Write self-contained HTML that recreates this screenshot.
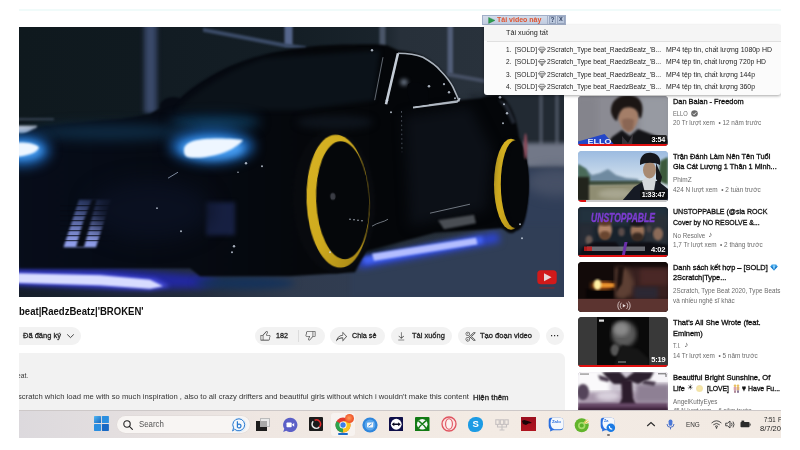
<!DOCTYPE html>
<html lang="vi">
<head>
<meta charset="utf-8">
<title>YouTube</title>
<style>
html,body{margin:0;padding:0;}
body{width:800px;height:450px;background:#fff;overflow:hidden;position:relative;font-family:"Liberation Sans",sans-serif;color:#0f0f0f;}
#root{position:absolute;left:0;top:0;width:800px;height:450px;overflow:hidden;filter:blur(0.5px);}
.a{position:absolute;}
.t{position:absolute;white-space:nowrap;line-height:1.15;transform-origin:0 50%;}
.pill{position:absolute;background:#f2f2f2;border-radius:9px;height:18px;top:327px;}
.thumb{position:absolute;left:578px;width:90.300px;height:50.300px;border-radius:4px;overflow:hidden;background:#222;}
.thumb svg{position:absolute;left:0;top:0;}
</style>
</head>
<body>
<div id="root">
<!-- top faint line -->
<div class="a" style="left:18px;top:9px;width:764px;height:1.600px;background:#f0fbfa;"></div>
<!-- VIDEO -->
<div class="a" id="video" style="left:18px;top:26.800px;width:546px;height:270px;background:#0b141c;overflow:hidden;">
<svg id="scene" width="546" height="270" viewBox="18 26.800 546 270">
<defs>
<filter id="b05" color-interpolation-filters="sRGB" filterUnits="userSpaceOnUse" x="-40" y="-40" width="700" height="420"><feGaussianBlur stdDeviation="0.6"/></filter>
<filter id="b1" color-interpolation-filters="sRGB" filterUnits="userSpaceOnUse" x="-40" y="-40" width="700" height="420"><feGaussianBlur stdDeviation="1"/></filter>
<filter id="b2" color-interpolation-filters="sRGB" filterUnits="userSpaceOnUse" x="-40" y="-40" width="700" height="420"><feGaussianBlur stdDeviation="2"/></filter>
<filter id="b3" color-interpolation-filters="sRGB" filterUnits="userSpaceOnUse" x="-40" y="-40" width="700" height="420"><feGaussianBlur stdDeviation="3.5"/></filter>
<filter id="b6" color-interpolation-filters="sRGB" filterUnits="userSpaceOnUse" x="-40" y="-40" width="700" height="420"><feGaussianBlur stdDeviation="6"/></filter>
<filter id="b10" color-interpolation-filters="sRGB" filterUnits="userSpaceOnUse" x="-40" y="-40" width="700" height="420"><feGaussianBlur stdDeviation="10"/></filter>
<linearGradient id="floorg" x1="0" y1="0" x2="1" y2="0"><stop offset="0" stop-color="#161e2a"/><stop offset="0.3" stop-color="#222b3a"/><stop offset="0.5" stop-color="#303b4e"/><stop offset="1" stop-color="#34425a"/></linearGradient>
<linearGradient id="grl" x1="0" y1="0" x2="0" y2="1"><stop offset="0" stop-color="#2c3a66"/><stop offset="1" stop-color="#98a6f4"/></linearGradient>
<linearGradient id="bgw" x1="0" y1="0" x2="1" y2="0"><stop offset="0" stop-color="#0f191e"/><stop offset="0.24" stop-color="#101a20"/><stop offset="0.27" stop-color="#121c23"/><stop offset="0.5" stop-color="#141e25"/><stop offset="0.66" stop-color="#19232b"/><stop offset="0.7" stop-color="#27303a"/><stop offset="1" stop-color="#2a333d"/></linearGradient>
<linearGradient id="bodyg" x1="0" y1="0" x2="1" y2="0"><stop offset="0" stop-color="#070d1a"/><stop offset="0.35" stop-color="#060a12"/><stop offset="0.6" stop-color="#05070a"/><stop offset="1" stop-color="#040609"/></linearGradient>
<linearGradient id="yel" x1="0" y1="0" x2="1" y2="1"><stop offset="0" stop-color="#d8b424"/><stop offset="0.5" stop-color="#cfaa1e"/><stop offset="1" stop-color="#9c7e14"/></linearGradient>
</defs>
<!-- background wall -->
<rect x="19" y="27" width="545" height="270" fill="url(#bgw)"/>
<!-- pillars / beams -->
<rect x="143" y="20" width="15" height="93" fill="#263248" filter="url(#b2)"/>
<rect x="146" y="20" width="9" height="92" fill="#3a4a6a" filter="url(#b2)"/>
<rect x="284.500" y="20" width="8" height="26" fill="#56668c" filter="url(#b1)"/>
<rect x="379.5" y="20" width="6" height="30" fill="#4a5668" filter="url(#b1)"/>
<rect x="447.5" y="20" width="5.5" height="54" fill="#525e78" filter="url(#b1)"/>
<path d="M447 72 L486 79 L486 83 L447 76Z" fill="#465064" filter="url(#b1)"/>
<path d="M203 27.500 L284 43 L306 46 L306 49 L284 47 L203 31.500Z" fill="#3c4c68" filter="url(#b1)"/>
<rect x="470" y="93" width="100" height="50" fill="#222a33" filter="url(#b2)"/>
<rect x="539" y="90" width="4" height="55" fill="#454c5a" filter="url(#b1)"/>
<rect x="555" y="90" width="4" height="55" fill="#454c5a" filter="url(#b1)"/>
<!-- far right lighter band -->
<rect x="518" y="143" width="52" height="25" fill="#727888" filter="url(#b2)"/>
<!-- floor -->
<rect x="19" y="258" width="545" height="45" fill="url(#floorg)"/>
<rect x="500" y="168" width="70" height="132" fill="#303e58" filter="url(#b2)"/>
<ellipse cx="556" cy="182" rx="30" ry="14" fill="#465066" filter="url(#b6)"/>
<path d="M350 262 L500 225 L564 225 L564 297 L350 297Z" fill="#303e56" filter="url(#b2)"/>
<!-- left distant bright patch -->
<rect x="10" y="125.500" width="27" height="7.500" fill="#c4cad8" filter="url(#b1)"/>
<rect x="12" y="118" width="42" height="2" fill="#3a4656" filter="url(#b1)"/>

<!-- underglow front -->
<path d="M10 268 L120 269 L200 275 L222 281 L200 288 L120 289 L10 284Z" fill="#2228a0" filter="url(#b3)"/>
<path d="M10 272 L100 273.500 L155 278.500 L170 286 L150 289.500 L100 286.500 L10 283.500Z" fill="#4a50e0" filter="url(#b2)"/>
<path d="M10 273 L100 275 L150 279.500 L163 286 L150 288.500 L100 285 L10 282.500Z" fill="#d8dcff" filter="url(#b1)"/>
<ellipse cx="245" cy="283" rx="50" ry="6" fill="#15325a" filter="url(#b3)"/>
<!-- underglow side -->
<path d="M356 259 L498 232 L500 242 L360 268Z" fill="#2c44d0" filter="url(#b3)"/>
<path d="M362 257 L482 236 L483 243 L365 264Z" fill="#4464f6" filter="url(#b2)"/>
<path d="M372 253.500 L476 237.500 L477.500 244 L374 260.500Z" fill="#b4beff" filter="url(#b1)"/>

<!-- car body -->
<path filter="url(#b1)" fill="url(#bodyg)" d="M19 137 C26 133 32 129 38 127 C50 125 56 124.500 60 124 C80 122 100 120 119.500 118.700 C130 117.500 140 115.500 150 113.700 L160 108 C158 100 170 94 180 98 C190 88 200 82 212 75 C228 66 243 60 259 56 C275 51 290 49 306 47 C320 45 340 44 353 44.4 C365 44 380 44 387 45 L398 50 C408 51 416 53 423 56 C430 60 436 64 440 69 C446 75 450 80 453 86 L459 100 C466 99 473 99 480 98 C487 96 493 94 498 95 C503 96 506 99 507 102 C511 107 513 112 515 118 C518 127 519 135 520 144 C523 150 525 158 526 165 C527 177 528 190 527 200 C526 210 525 218 522 225 L512.500 231 L501 228 L435 232.500 L366 251 L355 272 L290 276 L200 276 L190 268 L19 268Z"/>
<!-- windshield tint -->
<path filter="url(#b2)" fill="#0b1219" d="M176 110 C200 88 232 68 264 58 L380 50 L374 100 L300 110 Z"/>
<!-- hood blue sheen -->
<ellipse cx="215" cy="122" rx="45" ry="7" fill="#0f3c5e" filter="url(#b6)"/>
<ellipse cx="110" cy="132" rx="80" ry="8" fill="#0e2a42" filter="url(#b6)"/>
<!-- headlights -->
<ellipse cx="212" cy="146" rx="42" ry="17" fill="#1c64b4" filter="url(#b6)"/>
<ellipse cx="212" cy="148" rx="32" ry="11" fill="#469cf0" filter="url(#b3)"/>
<path d="M184 150 C184 142 195 139 210 138.500 C225 138 238 139 243 140 C238 146 228 152 215 155 C203 158 190 158.500 186 156 C184 154 184 152 184 150Z" fill="#eef6ff" filter="url(#b1)"/>
<ellipse cx="22" cy="150" rx="28" ry="16" fill="#1c64b4" filter="url(#b6)"/>
<ellipse cx="22" cy="150" rx="20" ry="9" fill="#469cf0" filter="url(#b3)"/>
<path d="M10 143 C22 141.500 34 142.500 39 147 C37 153 26 156.500 10 157Z" fill="#eef6ff" filter="url(#b1)"/>
<!-- grille lights -->
<path d="M79 199.5 L111 199.5 L96 247 L63.5 247Z" fill="url(#grl)" filter="url(#b1)"/>
<path d="M92 199 L97 199 L90 225 L84 247 L76 247 L83 222Z" fill="#070b12" filter="url(#b1)"/>
<rect x="206" y="202" width="29" height="33" fill="#172042" filter="url(#b2)"/>
<g stroke="#060a14" stroke-width="1.300" opacity="0.7"><path d="M60 205.500H115M60 210.500H115M60 215.500H115M60 220.500H115M60 225.500H115M60 230.500H115M60 235.500H115M60 240.500H115"/></g>
<!-- front wheel -->
<g transform="rotate(-2.4 338 200)">
<ellipse cx="334" cy="201" rx="41" ry="71.500" fill="#080a0e" filter="url(#b1)"/>
<ellipse cx="338" cy="201" rx="31.500" ry="66.500" fill="url(#yel)" filter="url(#b05)"/>
<ellipse cx="342.700" cy="200.300" rx="26.500" ry="59" fill="#05070a" filter="url(#b05)"/>
<ellipse cx="333" cy="196" rx="2.600" ry="3.600" fill="#3a3c44" filter="url(#b05)"/>
</g>
<!-- rear wheel -->
<ellipse cx="511" cy="185" rx="17" ry="48" fill="#06080b" filter="url(#b1)"/>
<ellipse cx="511" cy="184" rx="17" ry="45.500" fill="url(#yel)" filter="url(#b05)"/>
<ellipse cx="514.800" cy="184" rx="14" ry="43.500" fill="#05070a" filter="url(#b05)"/>
<ellipse cx="517.500" cy="184" rx="11" ry="46" fill="#05070a" filter="url(#b1)"/>
<ellipse cx="525.500" cy="146" rx="1.800" ry="13" fill="#8a4a5a" filter="url(#b1)"/>
<!-- window chrome -->
<path d="M398 53 L386 104" stroke="#c4ccd6" stroke-width="2.6" fill="none" filter="url(#b05)"/>
<path d="M398 53 C410 53 418 55 423 57 C430 61 436 65 440 70 C446 76 450 81 453 87 L459 100.5 L413.5 107" stroke="#aab2bc" stroke-width="1.6" fill="none" filter="url(#b05)"/>
<path d="M383 57 L374.700 100" stroke="#7a828c" stroke-width="0.800" fill="none"/>
<path d="M413 107.500 L457 101.800 L460 98" stroke="#c8d0da" stroke-width="1.800" fill="none" filter="url(#b05)"/>
<path d="M401.500 111 L402 152" stroke="#8a94a4" stroke-width="0.700" stroke-dasharray="1.500 3" fill="none" filter="url(#b05)"/>
<!-- gloss -->
<path d="M404 116 L470 106 L492 150 L486 210 L410 226Z" fill="#0c1017" filter="url(#b6)"/>
<ellipse cx="335" cy="122" rx="38" ry="7" fill="#0e141c" filter="url(#b3)"/>
<ellipse cx="150" cy="210" rx="60" ry="30" fill="#0a1020" filter="url(#b10)"/>
<path d="M498 99 L508 104 L516 122 L512 124 L505 108Z" fill="#222832" filter="url(#b1)"/>
<ellipse cx="404" cy="82" rx="3.500" ry="3" fill="#7a8698" filter="url(#b2)"/>
<!-- mirror -->
<path d="M408 84 C414 80 424 82 428 90 L429 104 L414 106 C408 100 406 90 408 84Z" fill="#04060a" filter="url(#b05)"/>
<!-- sparkles -->
<g fill="#cfd8e6" opacity="0.800" filter="url(#b05)"><circle cx="387" cy="100" r="1.300"/><circle cx="391" cy="112" r="1"/><circle cx="444" cy="84" r="1.100"/><circle cx="449" cy="92" r="1.200"/><circle cx="455" cy="98" r="1"/><circle cx="429" cy="86" r="1.300"/><circle cx="500" cy="97" r="1.300"/><circle cx="504" cy="104" r="1"/><circle cx="507" cy="113" r="1.200"/><circle cx="503" cy="123" r="1"/><circle cx="372" cy="50" r="1.200"/><circle cx="262" cy="166" r="1"/><circle cx="246" cy="163" r="1.200"/><circle cx="238" cy="172" r="0.800"/><circle cx="157" cy="208" r="0.900"/><circle cx="181" cy="231" r="1"/><circle cx="234" cy="246" r="1.200"/><circle cx="232" cy="252" r="1"/><circle cx="350" cy="219" r="0.800"/><circle cx="354" cy="219.500" r="0.800"/><circle cx="358" cy="220" r="0.800"/><circle cx="362" cy="220.500" r="0.800"/><circle cx="330" cy="252" r="1"/><circle cx="522" cy="238" r="1"/><circle cx="520" cy="224" r="1"/></g>
<path d="M168 178 L178 172" stroke="#9aa8c0" stroke-width="0.800" filter="url(#b05)"/>
<path d="M372 226 C378 222 384 222 388 219 M430 213 L470 204" stroke="#8a929c" stroke-width="0.800" fill="none" filter="url(#b05)"/>
<!-- side skirt reflection -->
<path d="M438 220 L474 214.500 L476 223 L444 229Z" fill="#4a4e54" filter="url(#b1)"/>
<!-- logo -->
<rect x="537.3" y="270" width="19.4" height="14" rx="3.5" fill="#d11a1a"/>
<path d="M544 273 L544 281 L551.500 277Z" fill="#e8d8d8"/>
<rect x="539.500" y="287" width="15" height="1.400" fill="#a01c1c" opacity="0.600" filter="url(#b05)"/>
</svg>
</div>
<!-- subscribe pill -->
<div class="pill" style="left:10px;width:71px;"></div>
<svg class="a" style="left:65.5px;top:332px;" width="9" height="8" viewBox="0 0 9 8"><path d="M1.2 2.4 L4.5 5.6 L7.8 2.4" fill="none" stroke="#333" stroke-width="0.9"/></svg>
<!-- like/dislike -->
<div class="pill" style="left:254.5px;width:70.5px;"></div>
<div class="a" style="left:297.5px;top:330px;width:0.8px;height:12px;background:#dcdcdc;"></div>
<svg class="a" style="left:259px;top:329.3px;" width="13" height="13" viewBox="0 0 24 24" fill="#222"><path d="M18.77,11h-4.23l1.52-4.94C16.38,5.03,15.54,4,14.38,4c-0.58,0-1.14,0.24-1.52,0.65L7,11H3v10h4h1h9.43 c1.06,0,1.98-0.67,2.19-1.61l1.34-6C21.23,12.15,20.18,11,18.77,11z M7,20H4v-8h3V20z M19.98,13.17l-1.34,6 C18.54,19.65,18.03,20,17.43,20H8v-8.61l5.6-6.06C13.79,5.12,14.08,5,14.38,5c0.26,0,0.5,0.11,0.63,0.3 c0.07,0.1,0.15,0.26,0.09,0.47l-1.52,4.94L13.18,12h1.35h4.23c0.41,0,0.8,0.17,1.03,0.46C19.92,12.61,20.05,12.86,19.98,13.17z"/></svg>
<svg class="a" style="left:303.5px;top:329px;" width="13" height="13" viewBox="0 0 24 24" fill="#222"><path d="M17,4h-1H6.57C5.5,4,4.59,4.67,4.38,5.61l-1.34,6C2.77,12.85,3.82,14,5.23,14h4.23l-1.52,4.94C7.62,19.97,8.46,21,9.62,21 c0.58,0,1.14-0.24,1.52-0.65L17,14h4V4H17z M10.4,19.67C10.21,19.88,9.92,20,9.62,20c-0.26,0-0.5-0.11-0.63-0.3 c-0.07-0.1-0.15-0.26-0.09-0.47l1.52-4.94l0.4-1.29H9.46H5.23c-0.41,0-0.8-0.17-1.03-0.46c-0.12-0.15-0.25-0.4-0.18-0.72l1.34-6 C5.46,5.35,5.97,5,6.57,5H16v8.610L10.4,19.67z M20,13h-3V5h3V13z"/></svg>
<!-- share -->
<div class="pill" style="left:330px;width:55px;"></div>
<svg class="a" style="left:335px;top:329.5px;" width="13" height="13" viewBox="0 0 24 24" fill="#222"><path d="M15,5.63L20.66,12L15,18.37V15v-1h-1c-3.96,0-7.14,1-9.750,3.090c1.840-4.070,5.110-6.400,9.890-7.100L15,9.860V9V5.630 M14,3v6 C6.220,10.130,3.110,15.330,2,21c2.780-3.970,6.440-6,12-6v6l8-9L14,3L14,3z"/></svg>
<!-- download -->
<div class="pill" style="left:391px;width:61px;"></div>
<svg class="a" style="left:394.700px;top:329.500px;" width="13" height="13" viewBox="0 0 24 24" fill="#222"><path d="M17,18v1H6v-1H17z M16.500,11.400l-0.700-0.700L12,14.400V4h-1v10.400l-3.800-3.800l-0.700,0.700l5,5L16.500,11.400z"/></svg>
<!-- clip -->
<div class="pill" style="left:458px;width:82px;"></div>
<svg class="a" style="left:463.500px;top:329.500px;" width="13" height="13" viewBox="0 0 24 24" fill="#222"><path d="M8,7c0,0.550-0.450,1-1,1S6,7.550,6,7c0-0.550,0.450-1,1-1S8,6.450,8,7z M7,16c-0.550,0-1,0.450-1,1c0,0.550,0.450,1,1,1s1-0.450,1-1 C8,16.450,7.550,16,7,16z M10.790,8.230L21,18.440V20h-3.270l-5.760-5.760l-1.270,1.270C10.890,15.970,11,16.470,11,17c0,2.210-1.790,4-4,4 c-2.210,0-4-1.790-4-4c0-2.210,1.790-4,4-4c0.420,0,0.810,0.080,1.190,0.200l1.370-1.370l-1.110-1.110C8,10.890,7.510,11,7,11c-2.210,0-4-1.790-4-4 c0-2.210,1.790-4,4-4c2.210,0,4,1.790,4,4C11,7.430,10.910,7.840,10.790,8.230z M10.080,8.940L9.650,8.500l0.190-0.580C9.950,7.580,10,7.280,10,7 c0-1.650-1.350-3-3-3S4,5.350,4,7c0,1.650,1.350,3,3,3c0.360,0,0.730-0.070,1.090-0.210L8.700,9.550l0.460,0.460l1.110,1.110l0.710,0.710l-0.710,0.710 L8.900,13.910l-0.430,0.430l-0.580-0.180C7.550,14.050,7.270,14,7,14c-1.650,0-3,1.350-3,3c0,1.650,1.350,3,3,3s3-1.350,3-3 c0-0.380-0.070-0.750-0.220-1.120l-0.250-0.610L10,14.800l1.270-1.270l0.710-0.710l0.710,0.710L18.150,19H20v-0.150L10.080,8.940z M17.730,4H21v1.560 l-5.520,5.520l-2.410-2.410L17.730,4z M18.150,5l-3.670,3.670l1,1L20,5.150V5H18.150z"/></svg>
<!-- more -->
<div class="pill" style="left:546px;width:18px;"></div>
<!-- description box -->
<div class="a" style="left:10px;top:353px;width:555px;height:70px;background:#f2f2f2;border-radius:6px;"></div>
<!-- SIDEBAR -->
<svg width="0" height="0" style="position:absolute"><defs>
<filter id="t05" color-interpolation-filters="sRGB"><feGaussianBlur stdDeviation="0.5"/></filter>
<filter id="t1" color-interpolation-filters="sRGB"><feGaussianBlur stdDeviation="1"/></filter>
<filter id="t2" color-interpolation-filters="sRGB"><feGaussianBlur stdDeviation="2"/></filter>
<filter id="t3" color-interpolation-filters="sRGB"><feGaussianBlur stdDeviation="3"/></filter>
</defs></svg>
<style>
.dur{position:absolute;right:1.8px;bottom:3.2px;background:rgba(10,10,10,.8);color:#fff;font-size:7.2px;font-weight:bold;padding:0.6px 1.5px;border-radius:1.5px;line-height:1;letter-spacing:-0.2px;}
.pb{position:absolute;left:0;bottom:0;height:2px;width:100%;background:#e01010;}
</style>
<!-- 1 Dan Balan -->
<div class="thumb" style="top:96.200px;background:#8d8d95;">
<svg width="90" height="50" viewBox="0 0 90 50">
<rect width="90" height="50" fill="#8b8b93"/>
<rect x="62" width="30" height="50" fill="#979aa2" filter="url(#t3)"/>
<rect x="-4" width="24" height="50" fill="#84848c" filter="url(#t3)"/>
<path d="M28 50 L34 41 L44 34 L52 40 L60 33 L76 39 L90 44 L90 50Z" fill="#141418" filter="url(#t1)"/>
<path d="M40 14 C40 8 46 6 51 6 C57 6 61 10 61 16 C61 24 58 32 52 36 C47 36 42 30 40 22Z" fill="#a47e68" filter="url(#t1)"/>
<path d="M44 24 C47 22 52 22 56 24 L55 33 L50 36 L45 32Z" fill="#8a6654" filter="url(#t1)"/>
<path d="M33 16 C32 4 42 -2 52 -1 C62 0 66 8 64 18 C63 24 61 24 60 17 C58 12 52 10 46 12 C42 14 40 20 39 25 C36 24 34 20 33 16Z" fill="#1c1614" filter="url(#t1)"/>
<path d="M44 40 L50 47 L55 38 L54 50 L44 50Z" fill="#38343a" filter="url(#t05)"/>
<path d="M0 50 L0 45.500 L26.500 38 L37.500 50Z" fill="#2446c8" filter="url(#t05)"/>
<text x="9.500" y="48.400" font-family="Liberation Sans, sans-serif" font-weight="bold" font-size="7" fill="#e8ecff" textLength="24" lengthAdjust="spacingAndGlyphs">ELLO</text>
</svg>
<div class="pb"></div><div class="dur">3:54</div></div>
<!-- 2 PhimZ -->
<div class="thumb" style="top:151.400px;background:#9db4c8;">
<svg width="90" height="50" viewBox="0 0 90 50">
<defs><linearGradient id="sky2" x1="0" y1="0" x2="0" y2="1"><stop offset="0" stop-color="#9cbbe0"/><stop offset="0.6" stop-color="#d4e2ee"/><stop offset="1" stop-color="#c8d0d0"/></linearGradient></defs>
<rect width="90" height="50" fill="url(#sky2)"/>
<path d="M0 14 L8 18 L14 24 L22 22 L30 18 L38 24 L48 27 L60 28 L62 34 L0 34Z" fill="#6f8aa0" filter="url(#t1)"/>
<path d="M0 13 L8 18 L12 26 L12 32 L0 32Z" fill="#4a6a58" filter="url(#t1)"/>
<rect x="0" y="30" width="70" height="5" fill="#3a4a3a" filter="url(#t1)"/>
<path d="M10 34 L62 33 L56 50 L0 50 L0 40Z" fill="#8f8d72" filter="url(#t1)"/>
<ellipse cx="38" cy="43" rx="18" ry="5" fill="#a8a690" filter="url(#t2)"/>
<rect x="-2" y="26" width="13" height="24" fill="#22241c" filter="url(#t1)"/>
<path d="M82 10 L90 6 L90 34 L80 30Z" fill="#3c5a3c" filter="url(#t1)"/>
<path d="M44 50 L56 36 L66 30 L80 30 L90 38 L90 50Z" fill="#161a24" filter="url(#t05)"/>
<path d="M64 30 L70 24 L78 28 L76 40 L68 46Z" fill="#d4d8dc" filter="url(#t05)"/>
<ellipse cx="71.5" cy="19" rx="6.5" ry="8.5" fill="#a88a72" filter="url(#t05)"/>
<path d="M62 12 C62 4 68 1 74 2 C81 3 83 8 82 14 C76 11 68 11 62 14Z" fill="#15171c" filter="url(#t05)"/>
<path d="M78 12 L84 26 L82 34 L78 28Z" fill="#15171c" filter="url(#t05)"/>
</svg>
<div class="pb" style="background:#c9c9c9;"></div><div class="pb" style="width:8px;"></div><div class="dur">1:33:47</div></div>
<!-- 3 Unstoppable -->
<div class="thumb" style="top:206.600px;background:#1b1a26;">
<svg width="90" height="50" viewBox="0 0 90 50">
<rect width="90" height="50" fill="#18222c"/>
<rect x="0" y="0" width="90" height="18" fill="#22323e" filter="url(#t2)"/>
<rect x="66" y="8" width="24" height="30" fill="#2a3038" filter="url(#t2)"/>
<rect x="0" y="16" width="16" height="24" fill="#262c36" filter="url(#t2)"/>
<ellipse cx="27" cy="23" rx="7" ry="8.500" fill="#b08468" filter="url(#t1)"/>
<ellipse cx="27" cy="28.500" rx="5.500" ry="4.500" fill="#6a4630" filter="url(#t1)"/>
<ellipse cx="27" cy="15.500" rx="7" ry="3.500" fill="#5a3a28" filter="url(#t1)"/>
<ellipse cx="59.500" cy="24" rx="7" ry="8.500" fill="#9a7258" filter="url(#t1)"/>
<ellipse cx="59.500" cy="30" rx="6" ry="4.500" fill="#3a2a22" filter="url(#t1)"/>
<ellipse cx="59.500" cy="16.500" rx="8" ry="3.500" fill="#16161a" filter="url(#t1)"/>
<ellipse cx="80" cy="27" rx="5" ry="6.500" fill="#8a6a58" filter="url(#t1)"/>
<ellipse cx="11" cy="33" rx="3.500" ry="4.500" fill="#6a5a54" filter="url(#t1)"/>
<ellipse cx="43.500" cy="25" rx="3.200" ry="4.200" fill="#5a4c4a" filter="url(#t1)"/>
<ellipse cx="71" cy="22" rx="2.600" ry="3.500" fill="#4a4244" filter="url(#t1)"/>
<path d="M0 50 L5 40 L16 35 L38 35 L44 43 L49 36 L72 35 L90 38 L90 50Z" fill="#0e0e14" filter="url(#t1)"/>
<rect x="9" y="39.500" width="58" height="4.500" fill="#c8ccd4" opacity="0.500" filter="url(#t05)"/>
<rect x="6" y="39.500" width="8" height="4.500" fill="#c81c1c" opacity="0.850" filter="url(#t05)"/>
<path d="M46.500 35 L49.500 35 L46.500 50 L43.500 50Z" fill="#6a30a8" filter="url(#t05)"/>
<text x="13" y="14.500" font-family="Liberation Sans, sans-serif" font-weight="bold" font-style="italic" font-size="12.500" fill="#7c3cd0" stroke="#7c3cd0" stroke-width="0.400" textLength="64" lengthAdjust="spacingAndGlyphs">UNSTOPPABLE</text>
</svg>
<div class="pb"></div><div class="dur" style="background:none;font-size:7.600px;right:1.500px;bottom:3px;">4:02</div></div>
<!-- 4 mix -->
<div class="thumb" style="top:262.100px;background:#1a0f0d;">
<svg width="90" height="50" viewBox="0 0 90 50">
<rect width="90" height="50" fill="#120a09"/>
<rect x="50" y="5" width="42" height="33" fill="#38201f" filter="url(#t2)"/>
<rect x="62" y="7" width="28" height="16" fill="#4a2826" filter="url(#t2)"/>
<path d="M37 5 L50 6 L56 20 L54 32 L46 38 L37 36Z" fill="#5e4034" filter="url(#t2)"/>
<path d="M40 4 L46 4 L44 22 L38 30Z" fill="#1c100e" filter="url(#t1)"/>
<rect x="56" y="25" width="24" height="12" fill="#2c2834" filter="url(#t2)"/>
<rect x="8" y="27" width="27" height="9.500" fill="#080404" filter="url(#t1)"/>
<ellipse cx="25" cy="23.500" rx="12" ry="4" fill="#c8661a" filter="url(#t2)"/>
<rect x="22" y="21.500" width="14" height="3.500" fill="#f09a30" filter="url(#t1)"/>
<ellipse cx="19.500" cy="22.500" rx="3.800" ry="5.200" fill="#fff0a4" filter="url(#t1)"/>
<rect x="0" y="36.800" width="90" height="13.500" fill="#5c3430"/>
<g fill="none" stroke="#e8dcdc" stroke-width="0.800" stroke-linecap="round"><path d="M43.200 41 A4 4 0 0 0 43.200 46.600"/><path d="M41.200 39.800 A6 6 0 0 0 41.200 47.800"/><path d="M48.800 41 A4 4 0 0 1 48.800 46.600"/><path d="M50.800 39.800 A6 6 0 0 1 50.800 47.800"/></g>
<path d="M44.800 42 L44.800 45.600 L47.800 43.800Z" fill="#e8dcdc"/>
</svg></div>
<!-- 5 TI -->
<div class="thumb" style="top:317.200px;background:#3a3a3a;">
<svg width="90" height="50" viewBox="0 0 90 50">
<rect width="90" height="50" fill="#393939"/>
<rect x="19" y="0" width="52" height="50" fill="#0a0a0a"/>
<ellipse cx="46" cy="17" rx="12.5" ry="13" fill="#5a5a5a" filter="url(#t2)"/>
<ellipse cx="43" cy="12" rx="8" ry="7" fill="#8a8a8a" filter="url(#t2)"/>
<ellipse cx="37" cy="33" rx="4.5" ry="6" fill="#585858" filter="url(#t1)"/>
<path d="M44 28 L60 32 L71 42 L71 50 L36 50 L40 36Z" fill="#161616" filter="url(#t1)"/>
<rect x="21" y="2.5" width="5" height="2.2" fill="#ddd" filter="url(#t05)"/>
<rect x="40" y="44.5" width="8" height="1" fill="#999" filter="url(#t05)"/>
</svg>
<div class="pb"></div><div class="dur" style="background:none;font-size:7.4px;right:1.5px;bottom:3px;">5:19</div></div>
<!-- 6 tree -->
<div class="thumb" style="top:372.300px;background:#a79aa8;">
<svg width="90" height="50" viewBox="0 0 90 50">
<rect width="90" height="50" fill="#cfc8d4"/>
<rect x="-2" y="-2" width="34" height="24" fill="#faf9fb" filter="url(#t2)"/>
<rect x="64" y="-2" width="30" height="14" fill="#f6f4f8" filter="url(#t2)"/>
<rect x="0" y="20" width="90" height="12" fill="#a898ac" filter="url(#t2)"/>
<rect x="58" y="12" width="34" height="18" fill="#8e8094" filter="url(#t2)"/>
<ellipse cx="30" cy="24" rx="12" ry="5" fill="#d8d0dc" filter="url(#t2)"/>
<path d="M24 0 L42 0 L48 6 L56 0 L76 0 L72 7 L60 12 L52 9 L44 12 L36 12 L30 7Z" fill="#2c202e" filter="url(#t1)"/>
<path d="M20 3 L32 6 L30 10 L22 8Z M66 8 L78 10 L76 14 L64 12Z" fill="#4a3c4e" filter="url(#t1)"/>
<path d="M43 8 L54 8 L55 26 L60 38 L39 38 L44 26Z" fill="#2c1c2c" filter="url(#t1)"/>
<ellipse cx="5" cy="20" rx="6" ry="8" fill="#54445a" filter="url(#t1)"/>
<rect x="0" y="31" width="90" height="19" fill="#644664" filter="url(#t1)"/>
<rect x="0" y="35.500" width="90" height="15" fill="#3e243c" filter="url(#t1)"/>
<rect x="2" y="1.600" width="9" height="0.900" fill="#666"/>
<path d="M80 1.800 L88 1.800 L88 5" fill="none" stroke="#555" stroke-width="0.900"/>
</svg></div>
<!-- verified / emoji icons -->
<svg class="a" style="left:690.5px;top:110.3px;" width="7" height="7" viewBox="0 0 7 7"><circle cx="3.5" cy="3.5" r="3.3" fill="#6a6a6a"/><path d="M1.900 3.600 L3.100 4.800 L5.200 2.400" fill="none" stroke="#fff" stroke-width="0.900"/></svg>
<svg class="a" style="left:769.500px;top:263.500px;" width="8" height="7" viewBox="0 0 8 7"><path d="M1.800 0.500 L6.200 0.500 L7.700 2.500 L4 6.600 L0.300 2.500Z" fill="#3aa0e8"/><path d="M0.300 2.500 L7.700 2.500 L4 6.600Z" fill="#1a78c8"/><path d="M2.800 2.500 L4 0.500 L5.200 2.500 L4 6.600Z" fill="#8ad0f8"/></svg>
<div class="a" style="left:695.700px;top:384.600px;width:7.400px;height:7.400px;border-radius:50%;background:radial-gradient(circle,#f8e9a8 0%,#f2e2a6 55%,#f6efd2 100%);"></div>
<svg class="a" style="left:732.500px;top:384px;" width="7" height="9" viewBox="0 0 7 9"><circle cx="2" cy="1.700" r="1.300" fill="#e8c060"/><circle cx="5" cy="1.700" r="1.300" fill="#e8c060"/><rect x="0.700" y="3" width="2.600" height="3.400" fill="#d8a0b0"/><rect x="3.700" y="3" width="2.600" height="3.400" fill="#e0b070"/><rect x="1" y="6.400" width="2" height="2.400" fill="#b08898"/><rect x="4" y="6.400" width="2" height="2.400" fill="#8a7a9a"/></svg>
<!-- IDM bar -->
<div class="a" id="idm" style="left:481.5px;top:15px;width:84px;height:9.5px;background:linear-gradient(180deg,#d3dcea,#bfcbe0);border:0.6px solid #a2afc8;box-sizing:border-box;"></div>
<div class="a" style="left:547px;top:15.5px;width:0.8px;height:8.5px;background:#a2afc8;"></div>
<div class="a" style="left:548.8px;top:16px;width:7.6px;height:7.6px;background:#bac7dc;border:0.5px solid #98a6c0;box-sizing:border-box;"></div>
<div class="a" style="left:557px;top:16px;width:7.6px;height:7.6px;background:#bac7dc;border:0.5px solid #98a6c0;box-sizing:border-box;"></div>
<svg class="a" style="left:488px;top:16.5px;" width="8" height="7" viewBox="0 0 8 7"><path d="M0.6 0.4 L7 3.4 L0.6 6.4Z" fill="#2c9c4c" stroke="#1c7c3c" stroke-width="0.4"/></svg>
<!-- IDM menu -->
<div class="a" id="menu" style="left:484px;top:25px;width:297px;height:70px;background:#fbfbfb;border-radius:3px;box-shadow:0 1px 3px rgba(0,0,0,.35);"></div>
<div class="a" style="left:484px;top:25px;width:297px;height:15.500px;background:#f5f5f5;border-radius:3px 3px 0 0;"></div>
<div class="a" style="left:487px;top:40.500px;width:294px;height:1px;background:#e0e0e0;"></div>
<svg class="a" style="left:538.400px;top:45.900px;" width="8" height="45" viewBox="0 0 9 45" preserveAspectRatio="none" fill="none" stroke="#555" stroke-width="0.7" stroke-linejoin="round">
<g id="dm"><path d="M2.2 1.2 L6.8 1.2 L8.4 3.2 L4.5 7.4 L0.6 3.2Z"/><path d="M0.6 3.2 L8.4 3.2 M3 3.2 L4.5 7.2 L6 3.2"/></g>
<use href="#dm" y="12.3"/><use href="#dm" y="24.5"/><use href="#dm" y="37.1"/>
</svg>
<!-- TASKBAR -->
<div class="a" id="tbwrap" style="left:0;top:0;width:800px;height:450px;z-index:5;">
<div class="a" id="taskbar" style="left:19px;top:410px;width:762px;height:28px;background:linear-gradient(90deg,#dcd9dd 0%,#e3dedf 12%,#efe7e2 32%,#f3ebe4 60%,#f2eae3 100%);border-top:1px solid #cdc8c8;box-sizing:border-box;"></div>
<!-- windows logo -->
<svg class="a" style="left:93.500px;top:416.300px;" width="15" height="15" viewBox="0 0 15 15">
<defs><linearGradient id="wg" x1="0" y1="0" x2="1" y2="1"><stop offset="0" stop-color="#52b8f4"/><stop offset="1" stop-color="#1566c0"/></linearGradient></defs>
<rect x="0" y="0" width="7" height="7" rx="0.6" fill="url(#wg)"/><rect x="7.9" y="0" width="7" height="7" rx="0.6" fill="#2a8ee0"/><rect x="0" y="7.9" width="7" height="7" rx="0.6" fill="#2a8ee0"/><rect x="7.9" y="7.9" width="7" height="7" rx="0.6" fill="#1768c4"/>
</svg>
<!-- search pill -->
<div class="a" style="left:116.5px;top:415.7px;width:133px;height:17.6px;border-radius:9px;background:#f8f5f3;box-shadow:0 0 0 0.5px #ded8d6;"></div>
<svg class="a" style="left:122px;top:419px;" width="12" height="12" viewBox="0 0 12 12" fill="none" stroke="#222" stroke-width="1.1"><circle cx="5" cy="5" r="3.2"/><path d="M7.4 7.4 L10.4 10.4" stroke-linecap="round"/></svg>
<!-- bing -->
<svg class="a" style="left:231px;top:416.5px;" width="16" height="16" viewBox="0 0 16 16">
<circle cx="8" cy="8" r="7.6" fill="#e4eef8"/>
<path d="M8 1.8 A6 6 0 1 1 3.6 12.2 L1.6 14 L2.6 10.8 A6 6 0 0 1 8 1.800Z" fill="#f4f8fc" stroke="#2a7ad0" stroke-width="1"/>
<path d="M6.400 4.200 L6.400 10.600 M6.400 8.200 A1.900 1.900 0 1 1 6.400 9.900" fill="none" stroke="#2a7ad0" stroke-width="1.200"/>
</svg>
<!-- task view -->
<div class="a" style="left:260px;top:417.5px;width:10px;height:9.5px;background:#e9e9e9;border:0.5px solid #bbb;box-sizing:border-box;"></div>
<div class="a" style="left:255.7px;top:421px;width:11.3px;height:10px;background:#1c1c1c;"></div>
<div class="a" style="left:260px;top:421px;width:7px;height:6px;background:#a9a9a9;"></div>
<!-- chat -->
<svg class="a" style="left:282px;top:416.500px;" width="16" height="16" viewBox="0 0 16 16">
<path d="M8.300 0.800 A7.100 7.100 0 1 1 4.200 13.700 L1.200 15 L2.300 11.800 A7.100 7.100 0 0 1 8.300 0.800Z" fill="#5b5fc7"/>
<rect x="4.500" y="5.400" width="5.200" height="4.800" rx="0.800" fill="#fff"/><path d="M9.900 7.800 L12.200 5.900 L12.200 9.700Z" fill="#fff"/>
</svg>
<!-- resolve-like -->
<div class="a" style="left:309px;top:416.800px;width:14.300px;height:14.300px;background:#1b1b1b;border-radius:1px;"></div>
<svg class="a" style="left:309px;top:416.800px;" width="14.300" height="14.300" viewBox="0 0 14.300 14.300" fill="none" stroke-width="1.500">
<path d="M4.200 4.200 A4.200 4.200 0 0 0 10.300 10" stroke="#e8e8e8"/><path d="M10.300 10 A4.200 4.200 0 0 0 5.600 3.200" stroke="#e02828"/></svg>
<!-- chrome highlight -->
<div class="a" style="left:331px;top:413px;width:24px;height:22.500px;border-radius:3px;background:rgba(255,255,255,.45);"></div>
<svg class="a" style="left:334.500px;top:416.500px;" width="16" height="16" viewBox="0 0 16 16">
<circle cx="8" cy="8" r="7.500" fill="#e33b2e"/>
<path d="M8 8 L1.500 4.250 A7.500 7.500 0 0 0 8 15.500 L11.500 9.500Z" fill="#2da44e"/>
<path d="M8 8 L8 15.500 A7.500 7.500 0 0 0 14.500 4.250 L8 4.250Z" fill="#f9c31f"/>
<circle cx="8" cy="8" r="3.600" fill="#fff"/><circle cx="8" cy="8" r="2.700" fill="#3a7ee8"/>
</svg>
<div class="a" style="left:344.500px;top:413.800px;width:9px;height:9px;border-radius:50%;background:radial-gradient(circle at 45% 45%,#ff9a5a 0%,#f0562a 60%,#e8482a 100%);"></div>
<div class="a" style="left:337.700px;top:433.200px;width:10px;height:1.800px;border-radius:1px;background:#1a6ac8;"></div>
<!-- blue circle app -->
<svg class="a" style="left:361.500px;top:416.700px;" width="16" height="16" viewBox="0 0 16 16">
<circle cx="8" cy="8" r="7.600" fill="#2f86dc"/><circle cx="8" cy="8" r="5.400" fill="#5aa6ec"/>
<path d="M5 6.500 Q5 5.500 6 5.500 L10.500 5.500 L11.500 4.600 L11.200 6.500 L11.200 9.500 Q11.200 10.500 10.200 10.500 L6 10.500 Q5 10.500 5 9.500Z" fill="#f2f6fa"/>
<path d="M6.500 9.200 L9.800 6.800" stroke="#2f86dc" stroke-width="0.900"/>
</svg>
<!-- teamviewer -->
<svg class="a" style="left:388.600px;top:416.700px;" width="14.500" height="14.500" viewBox="0 0 14.500 14.500">
<rect width="14.500" height="14.500" rx="1.600" fill="#0e0e48"/><circle cx="7.250" cy="7.250" r="5.400" fill="#fff"/>
<path d="M2.700 7.250 L5.300 5.300 L5.300 6.500 L9.200 6.500 L9.200 5.300 L11.800 7.250 L9.200 9.200 L9.200 8 L5.300 8 L5.300 9.200Z" fill="#0a0a20"/>
</svg>
<!-- xbox -->
<svg class="a" style="left:415px;top:416.700px;" width="14.500" height="14.500" viewBox="0 0 14.500 14.500">
<rect width="14.500" height="14.500" rx="1" fill="#127a14"/><circle cx="7.250" cy="7.250" r="5.300" fill="#f4f8f4"/>
<path d="M3.300 3.800 Q5.500 4.500 7.250 6.300 Q9 4.500 11.200 3.800 Q9.300 2.300 7.250 3.300 Q5.200 2.300 3.300 3.800Z M7.250 7.800 Q5 9.600 3.800 11.200 Q5.300 12.500 7.250 12.500 Q9.200 12.500 10.700 11.200 Q9.500 9.600 7.250 7.800Z M2.600 4.800 Q1.500 7.600 3 10.300 Q3.900 8 5.800 6.600 Q4.300 5.200 2.600 4.800Z M11.900 4.800 Q10.200 5.200 8.700 6.600 Q10.600 8 11.500 10.300 Q13 7.600 11.900 4.800Z" fill="#127a14" opacity="0"/>
<path d="M3.400 3.600 L7.250 7 L11.100 3.600 M3.600 11.200 Q5 8.500 7.250 7 Q9.500 8.500 10.900 11.200" fill="none" stroke="#127a14" stroke-width="1.500"/>
</svg>
<!-- opera -->
<svg class="a" style="left:440.500px;top:416.200px;" width="16" height="16" viewBox="0 0 16 16">
<circle cx="8" cy="8" r="7" fill="#fae4e2" stroke="#e0525e" stroke-width="1.300"/><ellipse cx="8" cy="8" rx="3.400" ry="5.300" fill="#fdf2f0" stroke="#e0525e" stroke-width="1.100"/>
</svg>
<!-- skype -->
<div class="a" style="left:468px;top:416.700px;width:15px;height:15px;border-radius:50% 42% 50% 42%;background:#1c9be4;"></div>
<!-- network gray -->
<svg class="a" style="left:495px;top:418.500px;" width="14" height="12" viewBox="0 0 14 12" fill="none" stroke="#c6c1c1" stroke-width="1.100">
<rect x="0.800" y="0.800" width="3.400" height="4.600"/><rect x="5.300" y="0.800" width="3.400" height="4.600"/><rect x="9.800" y="0.800" width="3.400" height="4.600"/><path d="M2.500 5.400 L2.500 8 L11.500 8 L11.500 5.400 M7 5.400 L7 11 M4.500 11 L9.500 11"/>
</svg>
<!-- red icon -->
<div class="a" style="left:521.200px;top:416.700px;width:14.600px;height:14.300px;background:linear-gradient(180deg,#9c0f1e,#b0141f);"></div>
<svg class="a" style="left:521.200px;top:416.700px;" width="14.600" height="14.300" viewBox="0 0 14.600 14.300"><path d="M1 4 Q3 2.500 5 3.500 L8.500 4.500 L11 6 L7.500 6.500 L5 8 L2 7Z" fill="#1a0508"/></svg>
<!-- zalo -->
<svg class="a" style="left:547.500px;top:416.500px;" width="16" height="15" viewBox="0 0 16 15">
<path d="M3 0.700 L12 0.700 Q15.300 0.700 15.300 4 L15.300 10 Q15.300 13.300 12 13.300 L5 13.300 L2 14.600 L2.300 12.500 Q0.700 11.500 0.700 9 L0.700 4 Q0.700 0.700 3 0.700Z" fill="#2a6fe0"/>
<path d="M4.500 0.700 L12 0.700 Q15.300 0.700 15.300 4 L15.300 9.500 Q15.300 12.300 12 12.300 L6.500 12.300 Q2.700 11.500 2.500 6 Q2.500 2.500 4.500 0.700Z" fill="#f4f7fc"/>
</svg>
<!-- coccoc -->
<svg class="a" style="left:573.500px;top:416.500px;" width="16" height="16" viewBox="0 0 16 16">
<circle cx="7.700" cy="8.300" r="7" fill="#62b42c"/><circle cx="7.700" cy="8.600" r="3.700" fill="#a6dc6a"/><circle cx="7.700" cy="8.600" r="2" fill="#5cb028"/>
<path d="M9.500 5.500 L13.800 1.500 L14.800 3 L15.500 6 L11.500 7Z" fill="#f2e9dc"/><path d="M10 6 L13 2.500 M10.800 6.600 L14.600 4.200" stroke="#e6c83a" stroke-width="1"/>
</svg>
<!-- zalo call -->
<svg class="a" style="left:600px;top:416.500px;" width="16" height="16" viewBox="0 0 16 16">
<path d="M3 0.700 L11 0.700 Q14.300 0.700 14.300 4 L14.300 10 Q14.300 13.300 11 13.300 L5 13.300 L2 14.600 L2.300 12.500 Q0.700 11.500 0.700 9 L0.700 4 Q0.700 0.700 3 0.700Z" fill="#2a6fe0"/>
<path d="M4.500 0.700 L11 0.700 Q14.300 0.700 14.300 4 L14.300 9.500 Q14.300 12.300 11 12.300 L6.500 12.300 Q2.700 11.500 2.500 6 Q2.500 2.500 4.500 0.700Z" fill="#f4f7fc"/>
<circle cx="10.800" cy="10.800" r="4.300" fill="#1a7ae4"/><path d="M9.300 9 Q9.300 12 12.300 12.300" fill="none" stroke="#fff" stroke-width="1.100"/>
</svg>
<div class="a" style="left:606.500px;top:434px;width:3.500px;height:1.500px;border-radius:1px;background:#7a7676;"></div>
<!-- chevron -->
<svg class="a" style="left:646px;top:421px;" width="10" height="7" viewBox="0 0 10 7"><path d="M1.200 5 L5 1.500 L8.800 5" fill="none" stroke="#2a2a2a" stroke-width="1.100"/></svg>
<!-- mic -->
<svg class="a" style="left:665.500px;top:418.500px;" width="9" height="11" viewBox="0 0 9 11"><rect x="2.600" y="0.400" width="3.800" height="6.400" rx="1.900" fill="#4a78d8"/><path d="M1 5 Q1 8.300 4.500 8.300 Q8 8.300 8 5 M4.500 8.300 L4.500 10.400" fill="none" stroke="#3a62c0" stroke-width="0.900"/></svg>
<!-- wifi -->
<svg class="a" style="left:710.500px;top:420px;" width="11" height="9" viewBox="0 0 11 9" fill="none" stroke="#3a3a3a" stroke-width="0.900"><path d="M0.600 3 Q5.500 -1.400 10.400 3"/><path d="M2.300 4.800 Q5.500 2 8.700 4.800"/><path d="M4 6.500 Q5.500 5.300 7 6.500"/><circle cx="5.500" cy="7.800" r="0.500" fill="#3a3a3a"/></svg>
<!-- volume -->
<svg class="a" style="left:724.500px;top:420px;" width="11" height="9" viewBox="0 0 11 9" fill="none" stroke="#3a3a3a" stroke-width="0.900"><path d="M0.700 3.200 L2.600 3.200 L5 1 L5 8 L2.600 5.800 L0.700 5.800Z"/><path d="M6.500 2.800 Q7.600 4.500 6.500 6.200 M8 1.600 Q10 4.500 8 7.400"/></svg>
<!-- battery -->
<svg class="a" style="left:739.500px;top:420px;" width="11" height="8" viewBox="0 0 11 8"><rect x="0.500" y="2" width="9" height="5.200" rx="0.800" fill="#2c2c2c"/><rect x="9.600" y="3.600" width="1" height="2" fill="#2c2c2c"/><path d="M1.500 2.200 L1.500 0.600 L4.200 0.600 L4.200 2.200" fill="#2c2c2c"/></svg>
</div>

<!-- TEXT -->
<div class="t" id="title" style="left:19px;top:305.36px;font-size:10.5px;font-weight:bold;color:#0f0f0f;transform:scaleX(0.9101);">beat|RaedzBeatz|'BROKEN'</div>
<div class="t" id="sub" style="left:23px;top:330.74px;font-size:8.1px;font-weight:normal;color:#222;transform:scaleX(0.9279);-webkit-text-stroke:0.3px #222;">Đã đăng ký</div>
<div class="t" id="likes" style="left:276px;top:330.74px;font-size:8.1px;font-weight:normal;color:#222;transform:scaleX(0.8879);-webkit-text-stroke:0.3px #222;">182</div>
<div class="t" id="share" style="left:352px;top:330.74px;font-size:8.1px;font-weight:normal;color:#222;transform:scaleX(0.8888);-webkit-text-stroke:0.3px #222;">Chia sẻ</div>
<div class="t" id="dl" style="left:411.6px;top:330.74px;font-size:8.1px;font-weight:normal;color:#222;transform:scaleX(0.9227);-webkit-text-stroke:0.3px #222;">Tải xuống</div>
<div class="t" id="clip" style="left:480px;top:330.74px;font-size:8.1px;font-weight:normal;color:#222;transform:scaleX(0.9317);-webkit-text-stroke:0.3px #222;">Tạo đoạn video</div>
<div class="t" id="more" style="left:550.5px;top:330.90px;font-size:8px;font-weight:bold;color:#222;letter-spacing:0.3px;">···</div>
<div class="t" id="d1" style="left:17px;top:371.63px;font-size:7.6px;font-weight:normal;color:#333;transform:scaleX(0.8838);">eat.</div>
<div class="t" id="d2" style="left:17.7px;top:393.13px;font-size:7.6px;font-weight:normal;color:#333;transform:scaleX(1.0093);">scratch which load me with so much inspiration , also to all crazy drifters and beautiful girls without which i wouldn't make this content</div>
<div class="t" id="d3" style="left:473px;top:392.70px;font-size:8px;font-weight:normal;color:#222;transform:scaleX(0.9762);-webkit-text-stroke:0.3px #222;">Hiện thêm</div>
<div class="t" id="s1a" style="left:673.3px;top:96.90px;font-size:8px;font-weight:normal;color:#0f0f0f;transform:scaleX(0.9244);-webkit-text-stroke:0.32px #0f0f0f;">Dan Balan - Freedom</div>
<div class="t" id="s1b" style="left:673.3px;top:109.69px;font-size:6.8px;font-weight:normal;color:#6c6c6c;transform:scaleX(0.8453);">ELLO</div>
<div class="t" id="s1c" style="left:673.3px;top:119.09px;font-size:6.8px;font-weight:normal;color:#6c6c6c;transform:scaleX(0.9414);">20 Tr lượt xem &nbsp;• 12 năm trước</div>
<div class="t" id="s2a" style="left:673.3px;top:152.00px;font-size:8px;font-weight:normal;color:#0f0f0f;transform:scaleX(0.9232);-webkit-text-stroke:0.32px #0f0f0f;">Trận Đánh Làm Nên Tên Tuổi</div>
<div class="t" id="s2b" style="left:673.3px;top:162.40px;font-size:8px;font-weight:normal;color:#0f0f0f;transform:scaleX(0.9162);-webkit-text-stroke:0.32px #0f0f0f;">Gia Cát Lượng 1 Thân 1 Minh...</div>
<div class="t" id="s2c" style="left:673.3px;top:176.09px;font-size:6.8px;font-weight:normal;color:#6c6c6c;transform:scaleX(0.9521);">PhimZ</div>
<div class="t" id="s2d" style="left:673.3px;top:185.59px;font-size:6.8px;font-weight:normal;color:#6c6c6c;transform:scaleX(0.9475);">424 N lượt xem &nbsp;• 2 tuần trước</div>
<div class="t" id="s3a" style="left:673.3px;top:207.00px;font-size:8px;font-weight:normal;color:#0f0f0f;transform:scaleX(0.8825);-webkit-text-stroke:0.32px #0f0f0f;">UNSTOPPABLE (@sia ROCK</div>
<div class="t" id="s3b" style="left:673.3px;top:217.90px;font-size:8px;font-weight:normal;color:#0f0f0f;transform:scaleX(0.8679);-webkit-text-stroke:0.32px #0f0f0f;">Cover by NO RESOLVE &amp;...</div>
<div class="t" id="s3c" style="left:673.3px;top:231.59px;font-size:6.8px;font-weight:normal;color:#6c6c6c;transform:scaleX(0.9192);">No Resolve</div>
<div class="t" id="s3d" style="left:673.3px;top:241.09px;font-size:6.8px;font-weight:normal;color:#6c6c6c;transform:scaleX(0.9385);">1,7 Tr lượt xem &nbsp;• 2 tháng trước</div>
<div class="t" id="s4a" style="left:673.3px;top:262.90px;font-size:8px;font-weight:normal;color:#0f0f0f;transform:scaleX(0.9226);-webkit-text-stroke:0.32px #0f0f0f;">Danh sách kết hợp – [SOLD]</div>
<div class="t" id="s4b" style="left:673.3px;top:273.40px;font-size:8px;font-weight:normal;color:#0f0f0f;transform:scaleX(0.9259);-webkit-text-stroke:0.32px #0f0f0f;">2Scratch|Type...</div>
<div class="t" id="s4c" style="left:673.3px;top:287.09px;font-size:6.8px;font-weight:normal;color:#6c6c6c;transform:scaleX(0.9279);">2Scratch, Type Beat 2020, Type Beats</div>
<div class="t" id="s4d" style="left:673.3px;top:296.59px;font-size:6.8px;font-weight:normal;color:#6c6c6c;transform:scaleX(0.9329);">và nhiều nghệ sĩ khác</div>
<div class="t" id="s5a" style="left:673.3px;top:317.90px;font-size:8px;font-weight:normal;color:#0f0f0f;transform:scaleX(0.9478);-webkit-text-stroke:0.32px #0f0f0f;">That's All She Wrote (feat.</div>
<div class="t" id="s5b" style="left:673.3px;top:328.90px;font-size:8px;font-weight:normal;color:#0f0f0f;transform:scaleX(0.9277);-webkit-text-stroke:0.32px #0f0f0f;">Eminem)</div>
<div class="t" id="s5c" style="left:673.3px;top:342.09px;font-size:6.8px;font-weight:normal;color:#6c6c6c;transform:scaleX(0.8482);">T.I.</div>
<div class="t" id="s5d" style="left:673.3px;top:351.59px;font-size:6.8px;font-weight:normal;color:#6c6c6c;transform:scaleX(0.9421);">14 Tr lượt xem &nbsp;• 5 năm trước</div>
<div class="t" id="s6a" style="left:673.3px;top:372.90px;font-size:8px;font-weight:normal;color:#0f0f0f;transform:scaleX(0.9471);-webkit-text-stroke:0.32px #0f0f0f;">Beautiful Bright Sunshine, Of</div>
<div class="t" id="s6b" style="left:673.3px;top:383.70px;font-size:8px;font-weight:normal;color:#0f0f0f;transform:scaleX(0.9065);-webkit-text-stroke:0.32px #0f0f0f;">Life</div>
<div class="t" id="s6sun" style="left:687.2px;top:383.99px;font-size:7.5px;font-weight:normal;color:#222;transform:scaleX(0.9143);font-family:"DejaVu Sans",sans-serif;">☀</div>
<div class="t" id="s6b2" style="left:707px;top:383.70px;font-size:8px;font-weight:normal;color:#0f0f0f;transform:scaleX(0.8528);-webkit-text-stroke:0.32px #0f0f0f;">[LOVE]</div>
<div class="t" id="s6b3" style="left:742px;top:383.70px;font-size:8px;font-weight:normal;color:#0f0f0f;transform:scaleX(0.8661);-webkit-text-stroke:0.32px #0f0f0f;font-family:"Liberation Sans","DejaVu Sans",sans-serif;">♥ Have Fu...</div>
<div class="t" id="s6c" style="left:673.3px;top:397.59px;font-size:6.8px;font-weight:normal;color:#6c6c6c;transform:scaleX(0.9274);">AngelKuttyEyes</div>
<div class="t" id="s6d" style="left:673.3px;top:407.09px;font-size:6.8px;font-weight:normal;color:#6c6c6c;transform:scaleX(0.8844);">45 N lượt xem &nbsp;• 6 năm trước</div>
<div class="t" id="idmt" style="left:497px;top:15.98px;font-size:7px;font-weight:bold;color:#e0532e;">Tải video này</div>
<div class="t" id="m0" style="left:505.6px;top:28.52px;font-size:7.8px;font-weight:normal;color:#222;transform:scaleX(0.9295);">Tải xuống tất</div>
<div class="t" id="m1n" style="left:505.6px;top:46.07px;font-size:7.7px;font-weight:normal;color:#222;transform:scaleX(0.8409);">1.</div>
<div class="t" id="m1a" style="left:515px;top:46.07px;font-size:7.7px;font-weight:normal;color:#222;transform:scaleX(0.8724);">[SOLD]</div>
<div class="t" id="m1b" style="left:547px;top:46.07px;font-size:7.7px;font-weight:normal;color:#222;transform:scaleX(0.8649);">2Scratch_Type beat_RaedzBeatz_'B...</div>
<div class="t" id="m1c" style="left:666px;top:46.07px;font-size:7.7px;font-weight:normal;color:#222;transform:scaleX(0.9057);">MP4 tệp tin, chất lượng 1080p HD</div>
<div class="t" id="m2n" style="left:505.6px;top:58.37px;font-size:7.7px;font-weight:normal;color:#222;transform:scaleX(0.8409);">2.</div>
<div class="t" id="m2a" style="left:515px;top:58.37px;font-size:7.7px;font-weight:normal;color:#222;transform:scaleX(0.8724);">[SOLD]</div>
<div class="t" id="m2b" style="left:547px;top:58.37px;font-size:7.7px;font-weight:normal;color:#222;transform:scaleX(0.8649);">2Scratch_Type beat_RaedzBeatz_'B...</div>
<div class="t" id="m2c" style="left:666px;top:58.37px;font-size:7.7px;font-weight:normal;color:#222;transform:scaleX(0.8869);">MP4 tệp tin, chất lượng 720p HD</div>
<div class="t" id="m3n" style="left:505.6px;top:70.57px;font-size:7.7px;font-weight:normal;color:#222;transform:scaleX(0.8409);">3.</div>
<div class="t" id="m3a" style="left:515px;top:70.57px;font-size:7.7px;font-weight:normal;color:#222;transform:scaleX(0.8724);">[SOLD]</div>
<div class="t" id="m3b" style="left:547px;top:70.57px;font-size:7.7px;font-weight:normal;color:#222;transform:scaleX(0.8649);">2Scratch_Type beat_RaedzBeatz_'B...</div>
<div class="t" id="m3c" style="left:666px;top:70.57px;font-size:7.7px;font-weight:normal;color:#222;transform:scaleX(0.8943);">MP4 tệp tin, chất lượng 144p</div>
<div class="t" id="m4n" style="left:505.6px;top:83.17px;font-size:7.7px;font-weight:normal;color:#222;transform:scaleX(0.8409);">4.</div>
<div class="t" id="m4a" style="left:515px;top:83.17px;font-size:7.7px;font-weight:normal;color:#222;transform:scaleX(0.8724);">[SOLD]</div>
<div class="t" id="m4b" style="left:547px;top:83.17px;font-size:7.7px;font-weight:normal;color:#222;transform:scaleX(0.8649);">2Scratch_Type beat_RaedzBeatz_'B...</div>
<div class="t" id="m4c" style="left:666px;top:83.17px;font-size:7.7px;font-weight:normal;color:#222;transform:scaleX(0.8943);">MP4 tệp tin, chất lượng 360p</div>
<div class="t" id="srch" style="left:138.5px;top:419.79px;font-size:8.2px;font-weight:normal;color:#555;transform:scaleX(0.9594);z-index:6;">Search</div>
<div class="t" id="eng" style="left:686px;top:420.55px;font-size:7.4px;font-weight:normal;color:#333;transform:scaleX(0.8617);z-index:6;">ENG</div>
<div class="t" id="clk" style="left:764px;top:415.71px;font-size:7.8px;font-weight:normal;color:#222;transform:scaleX(0.7704);z-index:6;">7:51</div>
<div class="t" id="clkp" style="left:778px;top:415.71px;font-size:7.8px;font-weight:normal;color:#222;transform:scaleX(0.8117);z-index:6;">PM</div>
<div class="t" id="dat" style="left:760px;top:424.71px;font-size:7.8px;font-weight:normal;color:#222;transform:scaleX(0.9684);z-index:6;">8/7/2023</div>
<div class="t" id="idq" style="left:550.6px;top:16.01px;font-size:6.6px;font-weight:bold;color:#3a4a6a;">?</div>
<div class="t" id="idx" style="left:559px;top:15.49px;font-size:6.8px;font-weight:bold;color:#3a4a6a;">x</div>
<div class="t" id="skS" style="left:472.6px;top:418.84px;font-size:9.5px;font-weight:bold;color:#fff;z-index:6;">S</div>
<div class="t" id="zl1" style="left:551.6px;top:420.19px;font-size:4.2px;font-weight:bold;color:#2a6fe0;transform:scaleX(1.0221);z-index:6;">Zalo</div>
<div class="t" id="zl2" style="left:604px;top:419.20px;font-size:4px;font-weight:bold;color:#2a6fe0;transform:scaleX(0.9632);z-index:6;">Za</div>
<div class="t" id="n3" style="left:708.5px;top:230.99px;font-size:7.5px;font-weight:normal;color:#555;font-family:"DejaVu Sans",sans-serif;">♪</div>
<div class="t" id="n5" style="left:684.5px;top:341.49px;font-size:7.5px;font-weight:normal;color:#555;font-family:"DejaVu Sans",sans-serif;">♪</div>
<!-- margin masks -->
<div class="a" style="left:0;top:0;width:18.600px;height:450px;background:#fff;z-index:9;"></div>
<div class="a" style="left:780.700px;top:0;width:19.300px;height:450px;background:#fff;z-index:9;"></div>
<div class="a" style="left:0;top:437.700px;width:800px;height:12.300px;background:#fff;z-index:9;"></div>
</div>
</body>
</html>
